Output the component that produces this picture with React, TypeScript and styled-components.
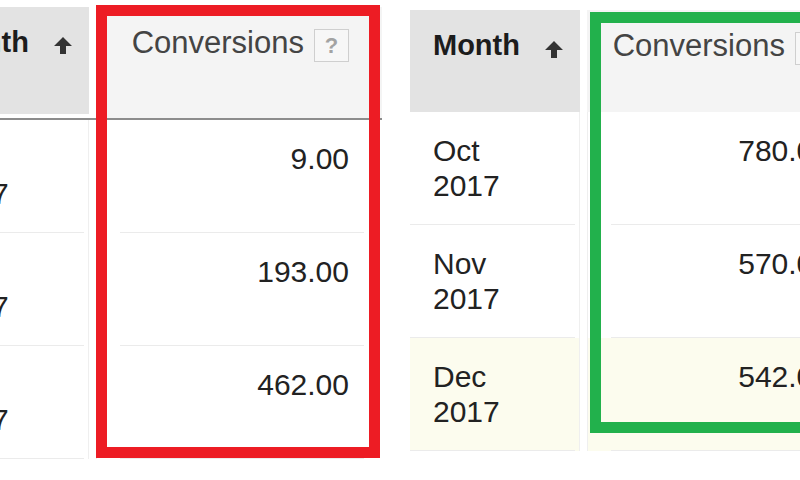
import React from "react";
import styled, { createGlobalStyle } from "styled-components";

const Global = createGlobalStyle`
  html, body { margin: 0; padding: 0; background: #ffffff; }
  body { font-family: "Liberation Sans", Arial, sans-serif; }
`;

const Page = styled.div`
  width: 800px;
  height: 480px;
  overflow: hidden;
  display: flex;
  align-items: flex-start;
  gap: 28px;
  background: #ffffff;
`;

const Panel = styled.div<{ $shift: number; $top: number; $width: number }>`
  position: relative;
  flex: none;
  width: ${(p) => p.$width}px;
  margin-left: ${(p) => p.$shift}px;
  padding-top: ${(p) => p.$top}px;
`;

const HeaderRow = styled.div<{ $cols: string; $height: number; $line: string }>`
  display: grid;
  grid-template-columns: ${(p) => p.$cols};
  column-gap: 7px;
  height: ${(p) => p.$height}px;
  border-bottom: ${(p) => p.$line};
`;

const MonthHead = styled.div<{ $trim: number }>`
  display: flex;
  align-items: flex-start;
  gap: 24px;
  padding: 18px 0 0 23px;
  margin-bottom: ${(p) => p.$trim}px;
  background: #e3e3e3;
  font-weight: 700;
  font-size: 29px;
  line-height: 35px;
  color: #1c1c1c;
`;

const SortArrow = styled.svg<{ $drop: number }>`
  flex: none;
  width: 20px;
  height: 18px;
  margin-top: ${(p) => p.$drop}px;
`;

const ConvHead = styled.div`
  display: flex;
  justify-content: flex-end;
  align-items: flex-start;
  gap: 10px;
  padding: 18px 33px 0 0;
  background: #f4f4f4;
  font-size: 31px;
  line-height: 35px;
  color: #444444;
  white-space: nowrap;
`;

const HelpBox = styled.span`
  flex: none;
  box-sizing: border-box;
  width: 35px;
  height: 33px;
  margin-top: 4px;
  border: 1px solid #cfcfcf;
  background: #f7f7f7;
  color: #a3a3a3;
  font-size: 22px;
  font-weight: 700;
  line-height: 31px;
  text-align: center;
`;

const Row = styled.div<{ $cols: string; $height: number }>`
  display: grid;
  grid-template-columns: ${(p) => p.$cols};
  column-gap: 7px;
  height: ${(p) => p.$height}px;
`;

const sep = "#ebebeb";

const MonthCell = styled.div<{ $hl: boolean }>`
  box-sizing: border-box;
  padding: 21px 0 0 23px;
  border-right: 1px solid #efefef;
  background: linear-gradient(${sep}, ${sep}) 0 100% / calc(100% - 4px) 1px no-repeat,
    ${(p) => (p.$hl ? "#fcfcee" : "#ffffff")};
  font-size: 30px;
  line-height: 35px;
  color: #222222;
`;

const ValueCell = styled.div<{ $hl: boolean }>`
  box-sizing: border-box;
  padding: 21px 33px 0 0;
  border-left: 1px solid #efefef;
  text-align: right;
  background: linear-gradient(${sep}, ${sep}) 23px 100% / calc(100% - 41px) 1px no-repeat,
    ${(p) => (p.$hl ? "#fcfcee" : "#ffffff")};
  font-size: 30px;
  line-height: 35px;
  color: #222222;
`;

const Highlight = styled.div<{
  $color: string;
  $left: number;
  $top: number;
  $w: number;
  $h: number;
}>`
  position: absolute;
  left: ${(p) => p.$left}px;
  top: ${(p) => p.$top}px;
  width: ${(p) => p.$w}px;
  height: ${(p) => p.$h}px;
  box-sizing: border-box;
  border: 11px solid ${(p) => p.$color};
  pointer-events: none;
`;

type RowData = { month: string; year: string; value: string; hl?: boolean };

type TableProps = {
  shift: number;
  top: number;
  convWidth: number;
  headHeight: number;
  headLine: string;
  headTrim: number;
  arrowDrop: number;
  rowHeight: number;
  rows: RowData[];
  box: { color: string; left: number; top: number; w: number; h: number };
};

const Arrow = ({ drop }: { drop: number }) => (
  <SortArrow $drop={drop} viewBox="0 0 20 18">
    <polygon points="10,1 19,10 13,10 13,18 7,18 7,10 1,10" fill="#333333" />
  </SortArrow>
);

const ConvTable = (p: TableProps) => {
  const cols = `170px ${p.convWidth}px`;
  return (
    <Panel $shift={p.shift} $top={p.top} $width={177 + p.convWidth}>
      <HeaderRow $cols={cols} $height={p.headHeight} $line={p.headLine}>
        <MonthHead $trim={p.headTrim}>
          <span>Month</span>
          <Arrow drop={p.arrowDrop} />
        </MonthHead>
        <ConvHead>
          <span>Conversions</span>
          <HelpBox>?</HelpBox>
        </ConvHead>
      </HeaderRow>
      {p.rows.map((r) => (
        <Row key={r.month} $cols={cols} $height={p.rowHeight}>
          <MonthCell $hl={!!r.hl}>
            {r.month}
            <br />
            {r.year}
          </MonthCell>
          <ValueCell $hl={!!r.hl}>{r.value}</ValueCell>
        </Row>
      ))}
      <Highlight
        $color={p.box.color}
        $left={p.box.left}
        $top={p.box.top}
        $w={p.box.w}
        $h={p.box.h}
      />
    </Panel>
  );
};

export default function App() {
  return (
    <>
      <Global />
      <Page>
        <ConvTable
          shift={-81}
          top={7}
          convWidth={286}
          headHeight={111}
          headLine="2px solid #8c8c8c"
          headTrim={4}
          arrowDrop={11}
          rowHeight={113}
          rows={[
            { month: "Oct", year: "2017", value: "9.00" },
            { month: "Nov", year: "2017", value: "193.00" },
            { month: "Dec", year: "2017", value: "462.00" },
          ]}
          box={{ color: "#ed1c24", left: 177, top: 5, w: 284, h: 453 }}
        />
        <ConvTable
          shift={0}
          top={10}
          convWidth={276}
          headHeight={102}
          headLine="none"
          headTrim={0}
          arrowDrop={12}
          rowHeight={113}
          rows={[
            { month: "Oct", year: "2017", value: "780.00" },
            { month: "Nov", year: "2017", value: "570.00" },
            { month: "Dec", year: "2017", value: "542.00", hl: true },
          ]}
          box={{ color: "#22b14c", left: 180, top: 12, w: 300, h: 421 }}
        />
      </Page>
    </>
  );
}
